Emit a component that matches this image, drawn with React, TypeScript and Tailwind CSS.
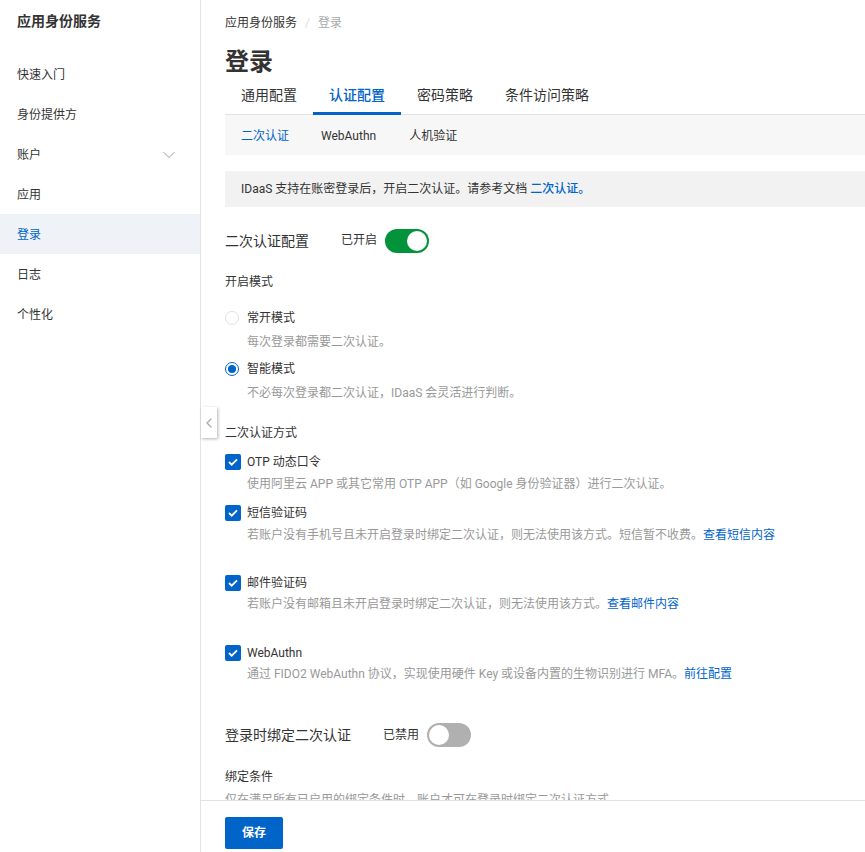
import { ChevronDown, ChevronLeft } from "lucide-react";

const navItems = ["快速入门", "身份提供方", "账户", "应用", "登录", "日志", "个性化"];

const Switch = ({ on }: { on: boolean }) => (
  <div className={`flex h-6 w-11 items-center rounded-full px-0.5 ${on ? "justify-end bg-[#03933a]" : "justify-start bg-[#b0b0b0]"}`}>
    <div className="h-5 w-5 rounded-full bg-white" />
  </div>
);

const Radio = ({ on }: { on: boolean }) => (
  <div className={`flex h-[14px] w-[14px] items-center justify-center rounded-full border bg-white ${on ? "border-[#0064c8]" : "border-[#e0e0e0]"}`}>
    {on && <div className="h-2 w-2 rounded-full bg-[#0064c8]" />}
  </div>
);

const Check = () => (
  <div className="flex h-4 w-4 items-center justify-center rounded-[2px] bg-[#0064c8]">
    <svg width="10" height="8" viewBox="0 0 10 8" fill="none">
      <path d="M1 4l2.7 2.7L9 1.3" stroke="#fff" strokeWidth="1.8" />
    </svg>
  </div>
);

interface RowProps {
  label: string;
  desc: string;
  link?: string;
  className: string;
  tight?: boolean;
}

const CheckRow = ({ label, desc, link, className, tight }: RowProps) => (
  <div className={className}>
    <div className="flex h-5 items-center">
      <Check />
      <span className="ml-[6px] text-[#333]">{label}</span>
    </div>
    <p className={`ml-[22px] h-5 leading-5 text-[#999] ${tight ? "mt-px" : "mt-[2px]"}`}>
      {desc}
      {link && <a className="text-[#0064c8]">{link}</a>}
    </p>
  </div>
);

const App = () => {
  return (
    <div className="relative flex h-[852px] w-[865px] overflow-hidden bg-white text-xs text-[#333] font-['Roboto','Noto_Sans_CJK_SC',sans-serif]">
      <aside className="w-[201px] shrink-0 border-r border-[#e3e3e3]">
        <h2 className="flex h-[42px] items-center pl-[17px] text-sm font-bold">应用身份服务</h2>
        <nav className="mt-3">
          {navItems.map((item) => (
            <div
              key={item}
              className={`flex h-10 items-center justify-between pt-0.5 pl-[17px] pr-[21px] ${item === "登录" ? "bg-[#eff3f8] text-[#0064c8]" : ""}`}
            >
              {item}
              {item === "账户" && <ChevronDown size={20} strokeWidth={1} className="text-[#888]" />}
            </div>
          ))}
        </nav>
      </aside>

      <div className="flex min-w-0 flex-1 flex-col">
        <main className="h-[800px] overflow-hidden pl-6">
          <div className="flex h-[46px] items-center gap-2">
            <span>应用身份服务</span>
            <span className="text-[#ddd]">/</span>
            <span className="text-[#aaa]">登录</span>
          </div>
          <h1 className="h-[29px] text-2xl leading-8 font-bold">登录</h1>

          <div className="flex h-10 border-b border-[#e3e3e3] text-sm">
            <div className="px-4 leading-10">通用配置</div>
            <div className="h-10 border-b-[3px] border-[#0064c8] px-4 leading-10 font-medium text-[#0064c8]">认证配置</div>
            <div className="px-4 leading-10">密码策略</div>
            <div className="px-4 leading-10">条件访问策略</div>
          </div>
          <div className="flex h-10 items-center gap-8 bg-[#f7f7f7] pt-0.5 pl-4">
            <span className="text-[#0064c8]">二次认证</span>
            <span className="mr-px">WebAuthn</span>
            <span>人机验证</span>
          </div>

          <div className="mt-4 flex h-9 items-center bg-[#f2f2f2] pl-4">
            IDaaS 支持在账密登录后，开启二次认证。请参考文档&nbsp;
            <a className="font-medium text-[#0064c8]">二次认证。</a>
          </div>

          <div className="mt-[22px] flex h-6 items-center">
            <span className="w-[116px] text-sm">二次认证配置</span>
            <span className="mr-2 -mt-0.5">已开启</span>
            <Switch on />
          </div>

          <p className="mt-[19px] leading-5">开启模式</p>

          <div className="mt-[16px] flex h-5 items-center">
            <Radio on={false} />
            <span className="ml-2">常开模式</span>
          </div>
          <p className="mt-1 ml-[22px] leading-5 text-[#999]">每次登录都需要二次认证。</p>
          <div className="mt-[7px] flex h-5 items-center">
            <Radio on />
            <span className="ml-2">智能模式</span>
          </div>
          <p className="mt-[4px] ml-[22px] leading-5 text-[#999]">不必每次登录都二次认证，IDaaS 会灵活进行判断。</p>

          <p className="mt-[20px] leading-5">二次认证方式</p>

          <CheckRow
            className="mt-[9px]"
            label="OTP 动态口令"
            desc="使用阿里云 APP 或其它常用 OTP APP（如 Google 身份验证器）进行二次认证。"
          />
          <CheckRow
            className="mt-[9px]"
            label="短信验证码"
            desc="若账户没有手机号且未开启登录时绑定二次认证，则无法使用该方式。短信暂不收费。"
            link="查看短信内容"
          />
          <CheckRow
            className="mt-[28px]"
            tight
            label="邮件验证码"
            desc="若账户没有邮箱且未开启登录时绑定二次认证，则无法使用该方式。"
            link="查看邮件内容"
          />
          <CheckRow
            className="mt-[29px]"
            tight
            label="WebAuthn"
            desc="通过 FIDO2 WebAuthn 协议，实现使用硬件 Key 或设备内置的生物识别进行 MFA。"
            link="前往配置"
          />

          <div className="mt-[39px] flex h-6 items-center">
            <span className="w-[158px] text-sm">登录时绑定二次认证</span>
            <span className="mr-2">已禁用</span>
            <Switch on={false} />
          </div>

          <p className="mt-[20px] leading-5">绑定条件</p>
          <p className="mt-[3px] leading-5 text-[#999]">仅在满足所有已启用的绑定条件时，账户才可在登录时绑定二次认证方式。</p>
        </main>

        <footer className="flex h-[52px] items-start border-t border-[#e3e3e3] pl-6 pt-4">
          <button className="h-8 w-[58px] rounded-[2px] bg-[#0064c8] font-bold text-white">保存</button>
        </footer>
      </div>

      <div className="absolute top-[407px] left-[201px] flex h-[31px] w-[16px] items-center justify-center bg-white shadow-[1px_1px_3px_rgba(0,0,0,0.3)]">
        <ChevronLeft size={20} strokeWidth={2} className="text-[#aaa]" />
      </div>
    </div>
  );
};

export default App;
